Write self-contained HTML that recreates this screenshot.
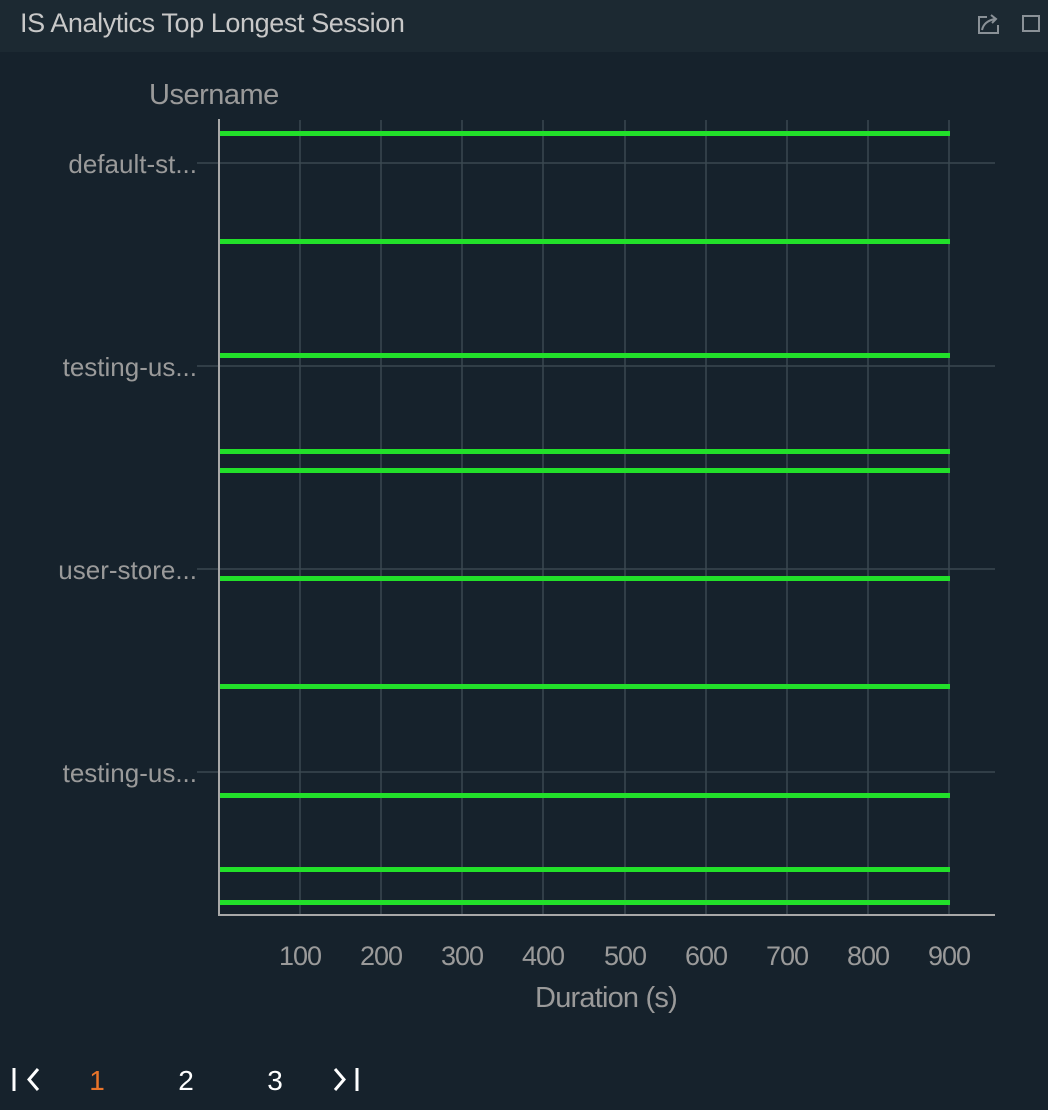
<!DOCTYPE html>
<html><head><meta charset="utf-8"><style>
html,body{margin:0;padding:0;background:#16222c;width:1048px;height:1110px;overflow:hidden;font-family:"Liberation Sans",sans-serif}
.hdr{position:absolute;left:0;top:0;width:1048px;height:52px;background:#1c2932}
.title{position:absolute;left:20px;top:8px;font-size:27px;color:#c8c8c8;letter-spacing:-0.4px}
svg{position:absolute;left:0;top:0}
</style></head><body>
<div class="hdr"><div class="title">IS Analytics Top Longest Session</div></div>
<svg width="1048" height="1110" xmlns="http://www.w3.org/2000/svg">
<g fill="none" stroke="#8a9197" stroke-width="2">
<path d="M987 17 L979 17 L979 33 L998 33 L998 25"/>
<path d="M982 30 Q984 21 995 19 M991 15 L996 19 L992 23"/>
<rect x="1023" y="16" width="16" height="15"/>
</g>
<text x="149" y="104" font-size="29" fill="#9a9a9a" letter-spacing="-0.5">Username</text>
<g stroke="#3a4850" stroke-width="1.5">
<line x1="300" y1="120" x2="300" y2="915"/><line x1="381" y1="120" x2="381" y2="915"/>
<line x1="462" y1="120" x2="462" y2="915"/><line x1="543" y1="120" x2="543" y2="915"/>
<line x1="625" y1="120" x2="625" y2="915"/><line x1="706" y1="120" x2="706" y2="915"/>
<line x1="787" y1="120" x2="787" y2="915"/><line x1="868" y1="120" x2="868" y2="915"/>
<line x1="949" y1="120" x2="949" y2="915"/>
<line x1="197" y1="163" x2="995" y2="163"/><line x1="197" y1="366" x2="995" y2="366"/>
<line x1="197" y1="569" x2="995" y2="569"/><line x1="197" y1="772" x2="995" y2="772"/>
</g>
<g fill="#22e02a">
<rect x="220" y="131" width="730" height="5"/><rect x="220" y="239" width="730" height="5"/>
<rect x="220" y="353" width="730" height="5"/><rect x="220" y="449" width="730" height="5"/>
<rect x="220" y="468" width="730" height="5"/><rect x="220" y="576" width="730" height="5"/>
<rect x="220" y="684" width="730" height="5"/><rect x="220" y="793" width="730" height="5"/>
<rect x="220" y="867" width="730" height="5"/><rect x="220" y="900" width="730" height="5"/>
</g>
<g stroke="#a8a8a8" stroke-width="2"><line x1="219" y1="119" x2="219" y2="916"/><line x1="218" y1="915" x2="995" y2="915"/></g>
<g font-size="26" fill="#9a9a9a" text-anchor="end">
<text x="197" y="173">default-st...</text><text x="197" y="376">testing-us...</text>
<text x="197" y="579">user-store...</text><text x="197" y="782">testing-us...</text>
</g>
<g font-size="27" fill="#9a9a9a" text-anchor="middle" letter-spacing="-1">
<text x="300" y="965">100</text><text x="381" y="965">200</text><text x="462" y="965">300</text>
<text x="543" y="965">400</text><text x="625" y="965">500</text><text x="706" y="965">600</text>
<text x="787" y="965">700</text><text x="868" y="965">800</text><text x="949" y="965">900</text>
<text x="606" y="1007" font-size="29" letter-spacing="-0.8">Duration (s)</text>
</g>
<g fill="none" stroke="#ffffff" stroke-width="3">
<path d="M14 1068 V1091 M38 1069 L29 1079.5 L38 1090"/>
<path d="M335 1069 L344 1079.5 L335 1090 M357 1068 V1091"/>
</g>
<g font-size="28" text-anchor="middle">
<text x="97" y="1090" fill="#e8742a">1</text>
<text x="186" y="1090" fill="#ffffff">2</text>
<text x="275" y="1090" fill="#ffffff">3</text>
</g>
</svg>
</body></html>
